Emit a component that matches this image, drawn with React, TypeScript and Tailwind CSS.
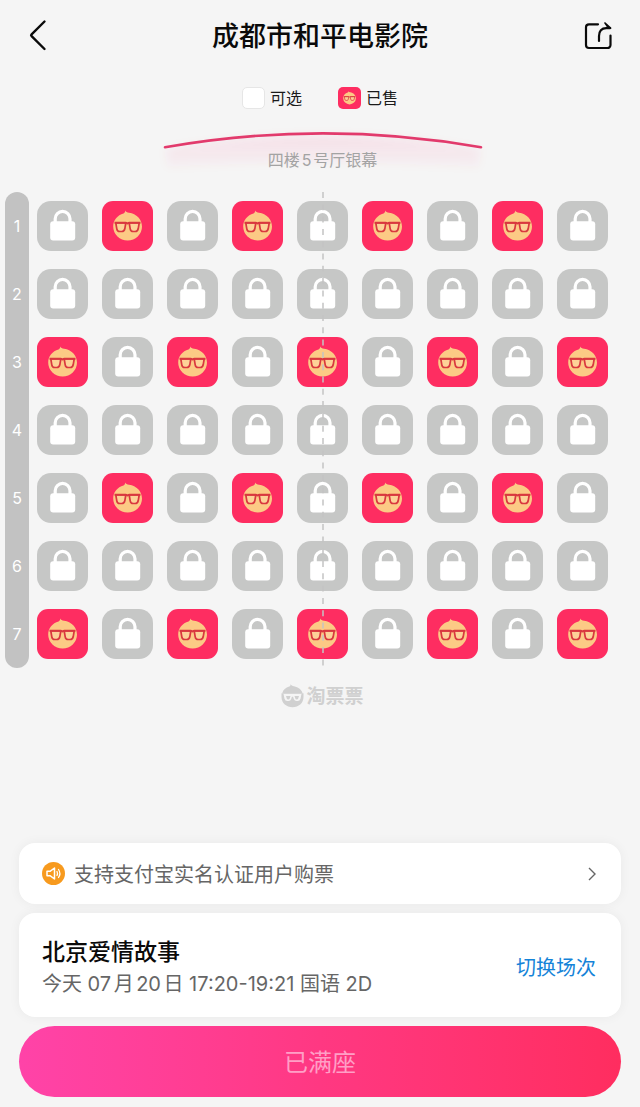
import clsx from "clsx";

const ROWS = [1, 2, 3, 4, 5, 6, 7];
const COLS = [1, 2, 3, 4, 5, 6, 7, 8, 9];

function isSold(row: number, col: number) {
  if (row === 1 || row === 5) return col % 2 === 0;
  if (row === 3 || row === 7) return col % 2 === 1;
  return false;
}

function FaceIcon({ className }: { className?: string }) {
  return (
    <svg viewBox="0 0 51 50" className={className} aria-hidden="true">
      <path
        d="M23 9.500c1 1.400 2 2 4 2.300C34.500 12.800 40 18.500 40 25.500a14.400 14 0 0 1-28.800 0c0-6.300 4.300-11.300 10.300-13 1.200-.6 1.700-1.500 1.500-3z"
        fill="#fcca85"
      />
      <path
        d="M13.800 22h10l-1 5.800c-.4 1.900-1.400 2.700-3 2.700h-2c-1.700 0-2.700-.8-3-2.700zM27.200 22h10l-1 5.800c-.4 1.900-1.400 2.700-3 2.700h-2c-1.700 0-2.700-.8-3-2.700z"
        fill="#fdd298"
        stroke="#d9383f"
        strokeWidth="1.700"
        strokeLinejoin="round"
      />
      <path d="M12.500 21.800h11.300l1.700.7 1.700-.7h11.300" fill="none" stroke="#d9383f" strokeWidth="1.900" />
    </svg>
  );
}

function LockIcon({ className }: { className?: string }) {
  return (
    <svg viewBox="0 0 51 50" className={className} aria-hidden="true">
      <path d="M18.200 22v-4.200a7.400 7.400 0 0 1 14.800 0V22" fill="none" stroke="#fff" strokeWidth="3.200" />
      <rect x="13.200" y="20.300" width="25" height="19.200" rx="3" fill="#fff" />
    </svg>
  );
}

function Seat({ row, col }: { row: number; col: number }) {
  const sold = isSold(row, col);
  return (
    <button
      type="button"
      disabled
      aria-label={`${row}排${col}座`}
      className={clsx("h-[50px] overflow-hidden", sold ? "rounded-[11px] bg-[#fe2d61]" : "rounded-[14px] bg-[#c6c7c6]")}
    >
      {sold ? <FaceIcon className="h-full w-full" /> : <LockIcon className="h-full w-full" />}
    </button>
  );
}

function Header() {
  return (
    <header className="flex h-[70px] items-center justify-between px-7">
      <button type="button" aria-label="返回" className="h-8 w-7">
        <svg viewBox="0 0 28 32" className="h-8 w-7" fill="none" stroke="#0a0a0a" strokeWidth="2.400" strokeLinecap="round" strokeLinejoin="round">
          <path d="M16.500 2.500 3.600 15.300q-.9.900 0 1.800L16.500 30" />
        </svg>
      </button>
      <h1 className="pt-[3px] text-[27px] leading-9 font-medium text-[#0a0a0a]">成都市和平电影院</h1>
      <button type="button" aria-label="分享" className="h-8 w-7">
        <svg viewBox="0 0 28 32" className="h-8 w-7" fill="none" stroke="#0a0a0a" strokeWidth="2.200" strokeLinecap="round" strokeLinejoin="round">
          <path d="M14 5.300H5a3 3 0 0 0-3 3V26a3 3 0 0 0 3 3h18.500a3 3 0 0 0 3-3V16.500" />
          <path d="M15 22v-5c0-5 2.500-7.800 7.300-7.800H26" />
          <path d="m21 4 5.600 5.200-4.200.1 1.300-1.600z" fill="#0a0a0a" strokeWidth="1.600" />
        </svg>
      </button>
    </header>
  );
}

function Legend() {
  return (
    <div className="mt-[17px] flex justify-center gap-9 text-base leading-[22px] text-[#1a1a1a]">
      <div className="flex gap-[5px]">
        <span className="h-[22px] w-[23px] rounded-[5px] border border-[#e6e6e6] bg-white" />
        可选
      </div>
      <div className="flex gap-[5px]">
        <span className="h-[22px] w-[23px] rounded-[5px] bg-[#fe2d61]">
          <FaceIcon className="h-full w-full" />
        </span>
        已售
      </div>
    </div>
  );
}

function Screen() {
  return (
    <div className="relative mt-5 h-[63px] pr-8 pl-[37px]">
      <svg viewBox="0 0 320 46" className="mx-auto h-[46px] w-80 overflow-visible" aria-hidden="true">
        <defs>
          <linearGradient id="glow" x1="0" y1="0" x2="0" y2="1">
            <stop offset="0" stopColor="#ff2d61" stopOpacity="0.090" />
            <stop offset="1" stopColor="#ff2d61" stopOpacity="0.020" />
          </linearGradient>
          <filter id="soft" x="-10%" y="-50%" width="120%" height="200%">
            <feGaussianBlur stdDeviation="4" />
          </filter>
        </defs>
        <path d="M3 20Q160-8 317 20L316 39Q160 28 4 39z" fill="url(#glow)" filter="url(#soft)" />
        <path d="M2 18.300Q160-9.500 318 18.300" fill="none" stroke="#e23a6c" strokeWidth="2.600" strokeLinecap="round" />
      </svg>
      <p className="absolute inset-x-0 top-5 pr-8 pl-[37px] text-center text-base leading-[22px] text-[#a3a3a3] [text-autospace:normal]">
        四楼5号厅银幕
      </p>
    </div>
  );
}

function SeatMap() {
  return (
    <div className="flex gap-2 pr-8 pl-[5px]">
      <ol className="flex w-6 flex-col gap-[18px] rounded-full bg-[#c2c2c2] py-[9px] text-center text-base leading-[50px] text-white">
        {ROWS.map((row) => (
          <li key={row}>{row}</li>
        ))}
      </ol>
      <div className="relative flex-1 py-[9px]">
        <div className="grid grid-cols-9 gap-x-[14px] gap-y-[18px]">
          {ROWS.map((row) => COLS.map((col) => <Seat key={`${row}-${col}`} row={row} col={col} />))}
        </div>
        {/* centre aisle line */}
        <svg className="pointer-events-none absolute inset-y-0 left-1/2 h-full w-[2px] -translate-x-1/2" aria-hidden="true">
          <line x1="1" y1="0" x2="1" y2="100%" stroke="#c4c4c4" strokeWidth="1.500" strokeDasharray="6 6.300" />
        </svg>
      </div>
    </div>
  );
}

function Watermark() {
  return (
    <div className="mt-[14px] flex items-center justify-center gap-[2px] pr-8 pl-[37px] text-[19px] font-bold text-[#d0d0d0]">
      <svg viewBox="0 0 23 24" className="h-6 w-[23px]" aria-hidden="true">
        <path d="M9.500 0c.8 1.500 1.800 1.900 3.500 2.200 4.500.8 7.600 3.600 8.600 7H1.200c.9-3.200 3.500-5.600 7-6.600 1.200-.5 1.500-1.300 1.300-2.600z" fill="#d0d0d0" />
        <path d="M.5 9.200h22v3.800C22.500 19 17.500 23.300 11.500 23.300S.5 19 .5 13z" fill="#d0d0d0" />
        <path d="M2.500 10h18l-1 4.800a3 3 0 0 1-2.900 2.200h-1a3 3 0 0 1-2.800-2.100l-.7-2.200h-1.200l-.7 2.200A3 3 0 0 1 7.400 17h-1a3 3 0 0 1-2.900-2.200z" fill="#f5f5f5" />
        <path d="M5 12h4.500l-.8 2.500a1.500 1.500 0 0 1-2.900 0zM13.500 12H18l-.8 2.500a1.500 1.500 0 0 1-2.900 0z" fill="#d0d0d0" />
      </svg>
      <span className="pt-[3px] leading-6">淘票票</span>
    </div>
  );
}

function BottomPanel() {
  return (
    <div className="mt-auto flex flex-col gap-[9px] px-[19px] pt-8 pb-[10px]">
      <a href="#notice" className="flex h-[61px] items-center rounded-2xl bg-white px-[23px] text-xl text-[#666] shadow-[0_0_12px_rgba(0,0,0,0.05)]">
        <svg viewBox="0 0 23 23" className="mr-[9px] size-[23px]" fill="none" stroke="#fff" strokeWidth="1.500" strokeLinecap="round" strokeLinejoin="round" aria-hidden="true">
          <circle cx="11.500" cy="11.500" r="11.500" fill="#f79a1e" stroke="none" />
          <path d="M5 9.300h3l4.500-3.300v11L8 13.700H5z" />
          <path d="M15 9.500q1 2 0 4M16.500 7.500q2.800 4 0 8" strokeWidth="1.300" />
        </svg>
        <span className="pt-[3px]">支持支付宝实名认证用户购票</span>
        <svg viewBox="0 0 8 14" className="mr-[2px] ml-auto h-[14px] w-2" fill="none" stroke="#666" strokeWidth="1.400" aria-hidden="true">
          <path d="m1 1 6 6-6 6" />
        </svg>
      </a>
      <section className="flex h-[104px] items-center justify-between rounded-2xl bg-white px-[23px] pt-[6px] shadow-[0_0_12px_rgba(0,0,0,0.05)]">
        <div>
          <h2 className="text-[23px] leading-8 font-medium text-[#0a0a0a]">北京爱情故事</h2>
          <p className="text-xl leading-8 text-[#666] [text-autospace:normal]">今天 07月20日 17:20-19:21 国语 2D</p>
        </div>
        <a href="#sessions" className="mr-[2px] text-xl text-[#1583d8]">
          切换场次
        </a>
      </section>
      <button type="button" className="h-[71px] rounded-full bg-linear-to-r from-[#ff43a8] via-[#ff3882] to-[#ff2d5f] pt-[3px] text-2xl text-[#ff9fc6]">
        已满座
      </button>
    </div>
  );
}

export default function App() {
  return (
    <main className="flex min-h-screen flex-col bg-[#f5f5f5] font-[Inter,'Noto_Sans_CJK_SC',sans-serif]">
      <Header />
      <Legend />
      <Screen />
      <SeatMap />
      <Watermark />
      <BottomPanel />
    </main>
  );
}
